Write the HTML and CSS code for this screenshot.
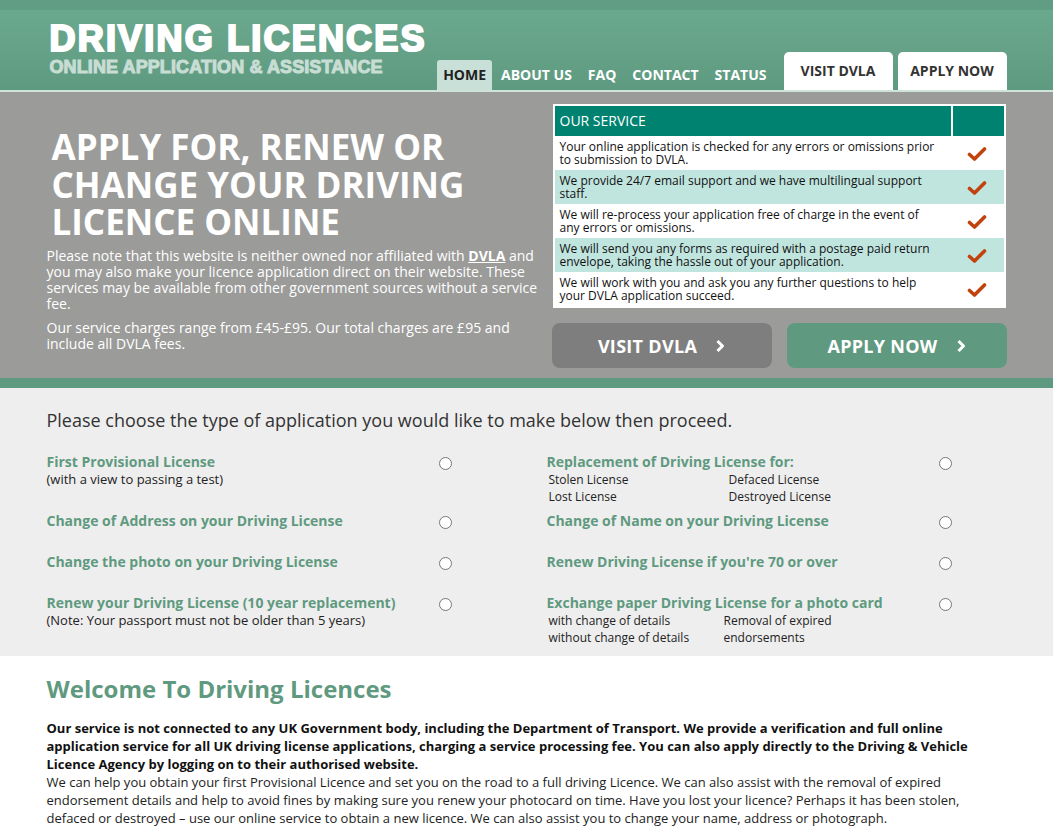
FILE: index.html
```html
<!DOCTYPE html>
<html lang="en">
<head>
<meta charset="utf-8">
<title>Driving Licences</title>
<link rel="stylesheet" href="styles.css">
</head>
<body>
<div class="topstrip"></div>
<header class="header">
  <div class="wrap header-inner">
    <div class="logo">
      <div class="logo-main">DRIVING LICENCES</div>
      <div class="logo-sub">ONLINE APPLICATION &amp; ASSISTANCE</div>
    </div>
    <nav class="nav">
      <a class="nav-item active">HOME</a>
      <a class="nav-item">ABOUT US</a>
      <a class="nav-item">FAQ</a>
      <a class="nav-item">CONTACT</a>
      <a class="nav-item">STATUS</a>
      <a class="nav-tab first">VISIT DVLA</a>
      <a class="nav-tab">APPLY NOW</a>
    </nav>
  </div>
</header>
<div class="header-line"></div>

<section class="hero">
  <div class="wrap hero-inner">
    <div class="hero-left">
      <h1 class="hero-title">APPLY FOR, RENEW OR CHANGE YOUR DRIVING LICENCE ONLINE</h1>
      <p class="hero-text">Please note that this website is neither owned nor affiliated with <a class="dvla-link">DVLA</a> and you may also make your licence application direct on their website. These services may be available from other government sources without a service fee.</p>
      <p class="hero-text second">Our service charges range from £45-£95. Our total charges are £95 and include all DVLA fees.</p>
    </div>
    <div class="hero-right">
      <div class="service">
        <div class="svc-head">
          <div class="svc-title">OUR SERVICE</div>
          <div class="svc-hcheck"></div>
        </div>
        <div class="svc-row">
          <div class="svc-text">Your online application is checked for any errors or omissions prior to submission to DVLA.</div>
          <div class="svc-check"><svg width="20" height="18" viewBox="0 0 20 18"><path d="M2.5 9.5 L7.5 14 L17.5 4" fill="none" stroke="#c2420e" stroke-width="3.6" stroke-linejoin="round" stroke-linecap="round"/></svg></div>
        </div>
        <div class="svc-row alt">
          <div class="svc-text">We provide 24/7 email support and we have multilingual support staff.</div>
          <div class="svc-check"><svg width="20" height="18" viewBox="0 0 20 18"><path d="M2.5 9.5 L7.5 14 L17.5 4" fill="none" stroke="#c2420e" stroke-width="3.6" stroke-linejoin="round" stroke-linecap="round"/></svg></div>
        </div>
        <div class="svc-row">
          <div class="svc-text">We will re-process your application free of charge in the event of any errors or omissions.</div>
          <div class="svc-check"><svg width="20" height="18" viewBox="0 0 20 18"><path d="M2.5 9.5 L7.5 14 L17.5 4" fill="none" stroke="#c2420e" stroke-width="3.6" stroke-linejoin="round" stroke-linecap="round"/></svg></div>
        </div>
        <div class="svc-row alt">
          <div class="svc-text">We will send you any forms as required with a postage paid return envelope, taking the hassle out of your application.</div>
          <div class="svc-check"><svg width="20" height="18" viewBox="0 0 20 18"><path d="M2.5 9.5 L7.5 14 L17.5 4" fill="none" stroke="#c2420e" stroke-width="3.6" stroke-linejoin="round" stroke-linecap="round"/></svg></div>
        </div>
        <div class="svc-row">
          <div class="svc-text">We will work with you and ask you any further questions to help your DVLA application succeed.</div>
          <div class="svc-check"><svg width="20" height="18" viewBox="0 0 20 18"><path d="M2.5 9.5 L7.5 14 L17.5 4" fill="none" stroke="#c2420e" stroke-width="3.6" stroke-linejoin="round" stroke-linecap="round"/></svg></div>
        </div>
      </div>
      <div class="hero-buttons">
        <a class="hero-btn grey">VISIT DVLA <svg width="10" height="14" viewBox="0 0 10 14"><path d="M2.5 2 L7.5 7 L2.5 12" fill="none" stroke="#fff" stroke-width="3" stroke-linejoin="round"/></svg></a>
        <a class="hero-btn green">APPLY NOW <svg width="10" height="14" viewBox="0 0 10 14"><path d="M2.5 2 L7.5 7 L2.5 12" fill="none" stroke="#fff" stroke-width="3" stroke-linejoin="round"/></svg></a>
      </div>
    </div>
  </div>
</section>
<div class="green-bar"></div>

<section class="choose">
  <div class="wrap">
    <h2 class="choose-title">Please choose the type of application you would like to make below then proceed.</h2>
    <div class="options">
      <div class="option">
        <div class="opt-body">
          <div class="opt-title">First Provisional License</div>
          <div class="opt-sub">(with a view to passing a test)</div>
        </div>
        <span class="radio"></span>
      </div>
      <div class="option">
        <div class="opt-body">
          <div class="opt-title">Replacement of Driving License for:</div>
          <div class="opt-grid g1">
            <span>Stolen License</span><span>Defaced License</span>
            <span>Lost License</span><span>Destroyed License</span>
          </div>
        </div>
        <span class="radio"></span>
      </div>
      <div class="option">
        <div class="opt-body">
          <div class="opt-title">Change of Address on your Driving License</div>
        </div>
        <span class="radio"></span>
      </div>
      <div class="option">
        <div class="opt-body">
          <div class="opt-title">Change of Name on your Driving License</div>
        </div>
        <span class="radio"></span>
      </div>
      <div class="option">
        <div class="opt-body">
          <div class="opt-title">Change the photo on your Driving License</div>
        </div>
        <span class="radio"></span>
      </div>
      <div class="option">
        <div class="opt-body">
          <div class="opt-title">Renew Driving License if you're 70 or over</div>
        </div>
        <span class="radio"></span>
      </div>
      <div class="option">
        <div class="opt-body">
          <div class="opt-title">Renew your Driving License (10 year replacement)</div>
          <div class="opt-sub">(Note: Your passport must not be older than 5 years)</div>
        </div>
        <span class="radio"></span>
      </div>
      <div class="option">
        <div class="opt-body">
          <div class="opt-title">Exchange paper Driving License for a photo card</div>
          <div class="opt-grid g2">
            <span>with change of details<br>without change of details</span>
            <span class="wrapcol">Removal of expired endorsements</span>
          </div>
        </div>
        <span class="radio"></span>
      </div>
    </div>
  </div>
</section>

<section class="welcome">
  <div class="wrap">
    <h2 class="welcome-title">Welcome To Driving Licences</h2>
    <p class="welcome-bold">Our service is not connected to any UK Government body, including the Department of Transport. We provide a verification and full online application service for all UK driving license applications, charging a service processing fee. You can also apply directly to the Driving &amp; Vehicle Licence Agency by logging on to their authorised website.</p>
    <p class="welcome-text">We can help you obtain your first Provisional Licence and set you on the road to a full driving Licence. We can also assist with the removal of expired endorsement details and help to avoid fines by making sure you renew your photocard on time. Have you lost your licence? Perhaps it has been stolen, defaced or destroyed – use our online service to obtain a new licence. We can also assist you to change your name, address or photograph.</p>
  </div>
</section>
</body>
</html>
```

FILE: styles.css
```css
* { box-sizing: border-box; }
html, body { margin: 0; padding: 0; }
body {
  font-family: "Open Sans", "Liberation Sans", sans-serif;
  color: #222;
  background: #fff;
}
a { text-decoration: none; color: inherit; }
p, h1, h2 { margin: 0; }

.wrap { width: 960px; margin: 0 auto; }

.topstrip { height: 10px; background: #619c84; }

.header {
  height: 80px;
  background: linear-gradient(#6ba98f, #5e9a80);
}
.header-inner {
  height: 80px;
  display: flex;
  justify-content: space-between;
  align-items: flex-end;
}
.logo {
  align-self: flex-start;
  padding: 11px 0 0 3px;
  font-family: "Liberation Sans", Arial, sans-serif;
  font-weight: 900;
}
.logo-main {
  font-size: 36px;
  line-height: 36px;
  color: #fff;
  -webkit-text-stroke: 2.2px #fff;
  letter-spacing: 2.2px;
}
.logo-sub {
  margin-top: 1px;
  font-size: 18px;
  line-height: 18px;
  color: #c8ddd4;
  -webkit-text-stroke: 1px #c8ddd4;
  letter-spacing: 0.1px;
}

.nav {
  display: flex;
  align-items: flex-end;
  gap: 2px;
}
.nav-item {
  height: 30px;
  line-height: 30px;
  padding: 0 7px;
  font-size: 14px;
  font-weight: 700;
  color: #fff;
  border-radius: 3px 3px 0 0;
}
.nav-item.active {
  background: #c9e0d8;
  color: #222;
  padding: 0 6px;
}
.nav-tab {
  height: 38px;
  width: 109px;
  display: flex;
  align-items: center;
  justify-content: center;
  padding-bottom: 1px;
  background: #fff;
  color: #333;
  font-size: 14px;
  font-weight: 700;
  border-radius: 5px 5px 0 0;
  margin-left: 3px;
}
.nav-tab.first { margin-left: 8px; }

.header-line { height: 2px; background: #cfe3da; }

.hero { background: #9b9b99; padding: 12px 0 10px; }
.hero-inner { display: flex; justify-content: space-between; }
.hero-left { width: 495px; color: #fff; }
.hero-title {
  margin: 24px 0 0 5px;
  font-size: 35px;
  line-height: 37.5px;
  font-weight: 700;
  color: #fff;
}
.hero-text {
  margin-top: 7px;
  font-size: 14px;
  line-height: 16px;
}
.hero-text.second { margin-top: 8px; }
.dvla-link { font-weight: 700; text-decoration: underline; }

.hero-right { width: 455px; }
.service {
  margin: 0 1px;
  border: 2px solid #fff;
  background: #fff;
}
.svc-head { display: flex; gap: 2px; height: 30px; }
.svc-title {
  flex: 1;
  background: #008270;
  color: #fff;
  font-size: 14px;
  line-height: 30px;
  padding-left: 5px;
}
.svc-hcheck { width: 51px; background: #008270; }
.svc-row {
  display: flex;
  align-items: center;
  height: 34px;
  background: #fff;
}
.svc-row.alt { background: #c0e5df; }
.svc-text {
  flex: 1;
  padding: 0 14px 0 5px;
  font-size: 12px;
  line-height: 13px;
  color: #111;
}
.svc-check {
  width: 53px;
  display: flex;
  justify-content: center;
  padding-top: 2px;
}

.hero-buttons {
  margin-top: 15px;
  display: flex;
  justify-content: space-between;
}
.hero-btn {
  width: 220px;
  height: 45px;
  border-radius: 8px;
  display: flex;
  align-items: center;
  justify-content: center;
  gap: 18px;
  color: #fff;
  font-size: 18px;
  font-weight: 700;
  letter-spacing: 0.3px;
}
.hero-btn.grey { background: #7e7e7e; }
.hero-btn.green { background: #5f9a80; }

.green-bar { height: 10px; background: #5e9a7f; }

.choose { background: #eeeeee; padding: 20px 0 4px; }
.choose-title {
  font-size: 18px;
  line-height: 25px;
  font-weight: 400;
  color: #333;
}
.options {
  margin-top: 19px;
  display: grid;
  grid-template-columns: 500px 460px;
}
.option {
  display: flex;
  align-items: flex-start;
  min-height: 41px;
  padding-bottom: 6px;
}
.opt-body { width: 392px; }
.opt-title {
  font-size: 14px;
  line-height: 19px;
  font-weight: 700;
  color: #5f9a80;
}
.opt-sub {
  font-size: 13px;
  line-height: 17px;
  color: #222;
}
.opt-grid {
  display: grid;
  font-size: 12px;
  line-height: 17px;
  color: #222;
  padding-left: 2px;
}
.opt-grid.g1 { grid-template-columns: 180px 150px; }
.opt-grid.g2 { grid-template-columns: 175px 120px; }
.radio {
  width: 13px;
  height: 13px;
  margin: 5px 0 0 0;
  border: 1px solid #777;
  border-radius: 50%;
  background: #fff;
  flex: none;
}

.welcome { padding: 16px 0 20px; }
.welcome-title {
  font-size: 24px;
  line-height: 33px;
  font-weight: 700;
  color: #5f9a80;
}
.welcome-bold {
  margin-top: 14px;
  font-size: 13px;
  line-height: 18px;
  font-weight: 700;
  color: #111;
}
.welcome-text {
  font-size: 13px;
  line-height: 18px;
  color: #222;
}
```
